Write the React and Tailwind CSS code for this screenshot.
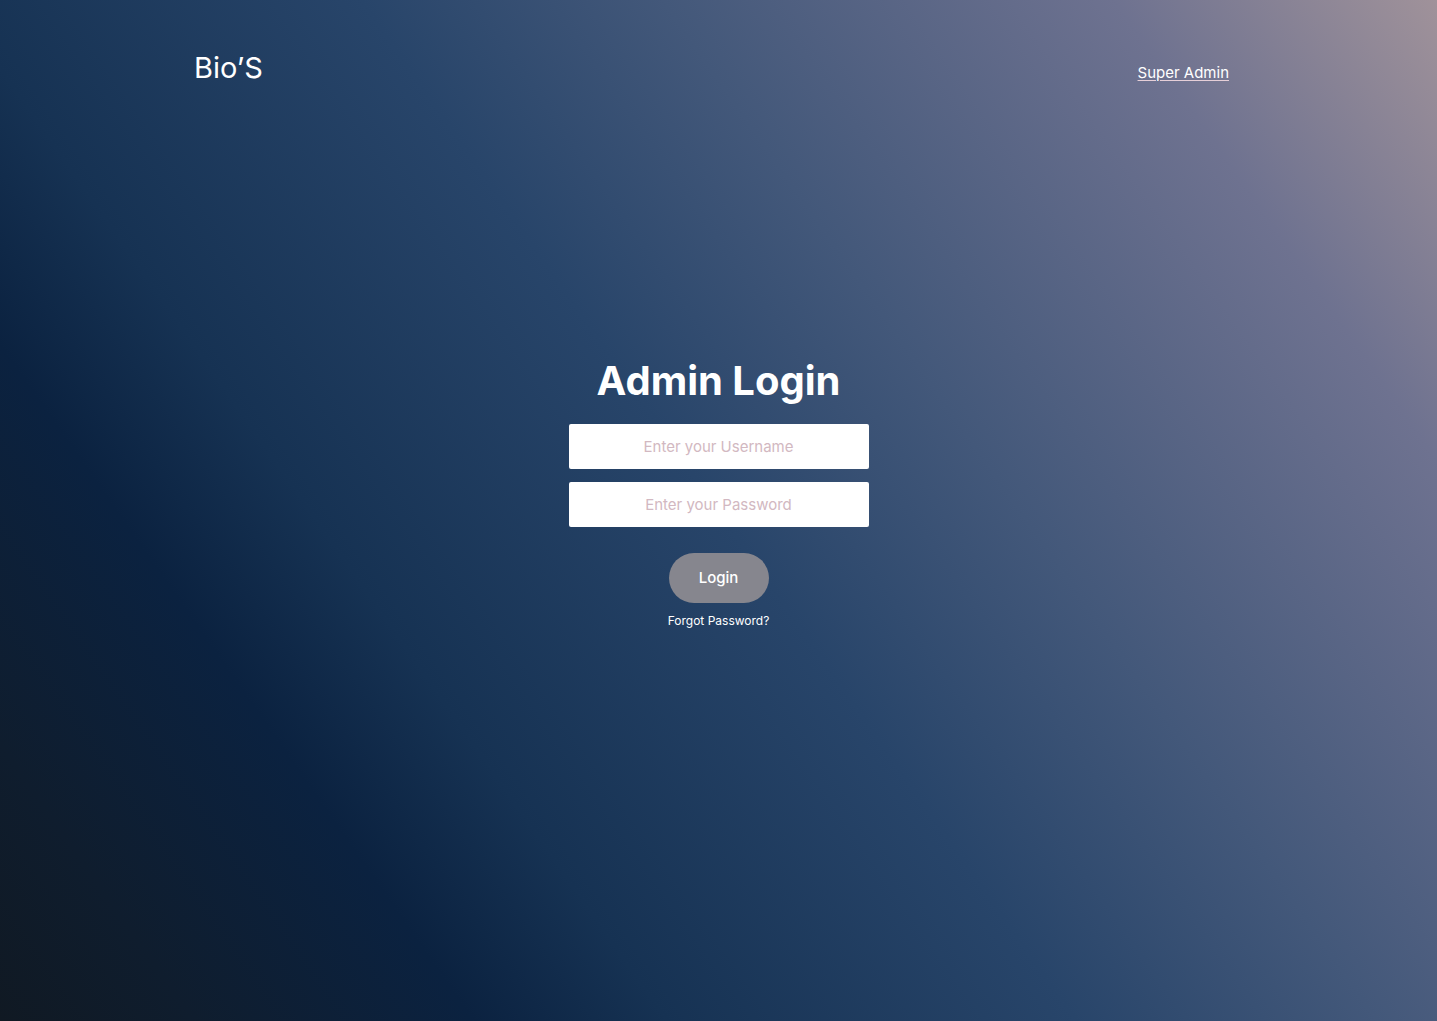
export default function App() {
  return (
    <div
      className="min-h-[1021px] w-full text-white bg-[linear-gradient(55deg,#101923_0%,#0f1d2e_9%,#0b2240_22%,#163253_31%,#28456a_50%,#43587a_64%,#6e7290_85%,#a0929a_100%)]"
      style={{ fontFamily: 'Inter, "Noto Sans", sans-serif' }}
    >
      <header className="flex items-start justify-between pl-[194px] pr-[208px] pt-[50px]">
        <div className="text-[29px] leading-9 font-normal">Bio’S</div>
        <a href="#" className="mt-[12px] text-[15px] underline underline-offset-2 decoration-[#e6cfd8]">
          Super Admin
        </a>
      </header>

      <main className="mt-[271px] flex flex-col items-center">
        <h1 className="text-[40px] leading-[48px] font-bold">Admin Login</h1>
        <form className="mt-[19px] flex flex-col items-center" onSubmit={(e) => e.preventDefault()}>
          <input
            type="text"
            placeholder="Enter your Username"
            className="h-[45px] w-[300px] rounded-[2px] bg-white text-center text-[15px] text-gray-700 placeholder:text-[#d2b8c1] focus:outline-none"
          />
          <input
            type="password"
            placeholder="Enter your Password"
            className="mt-[13px] h-[45px] w-[300px] rounded-[2px] bg-white text-center text-[15px] text-gray-700 placeholder:text-[#d2b8c1] focus:outline-none"
          />
          <button
            type="submit"
            className="mt-[26px] h-[50px] w-[100px] rounded-full bg-[#86868e] text-[15px] font-medium text-white"
          >
            Login
          </button>
          <a href="#" className="mt-[9px] text-[12px] text-white">
            Forgot Password?
          </a>
        </form>
      </main>
    </div>
  );
}
